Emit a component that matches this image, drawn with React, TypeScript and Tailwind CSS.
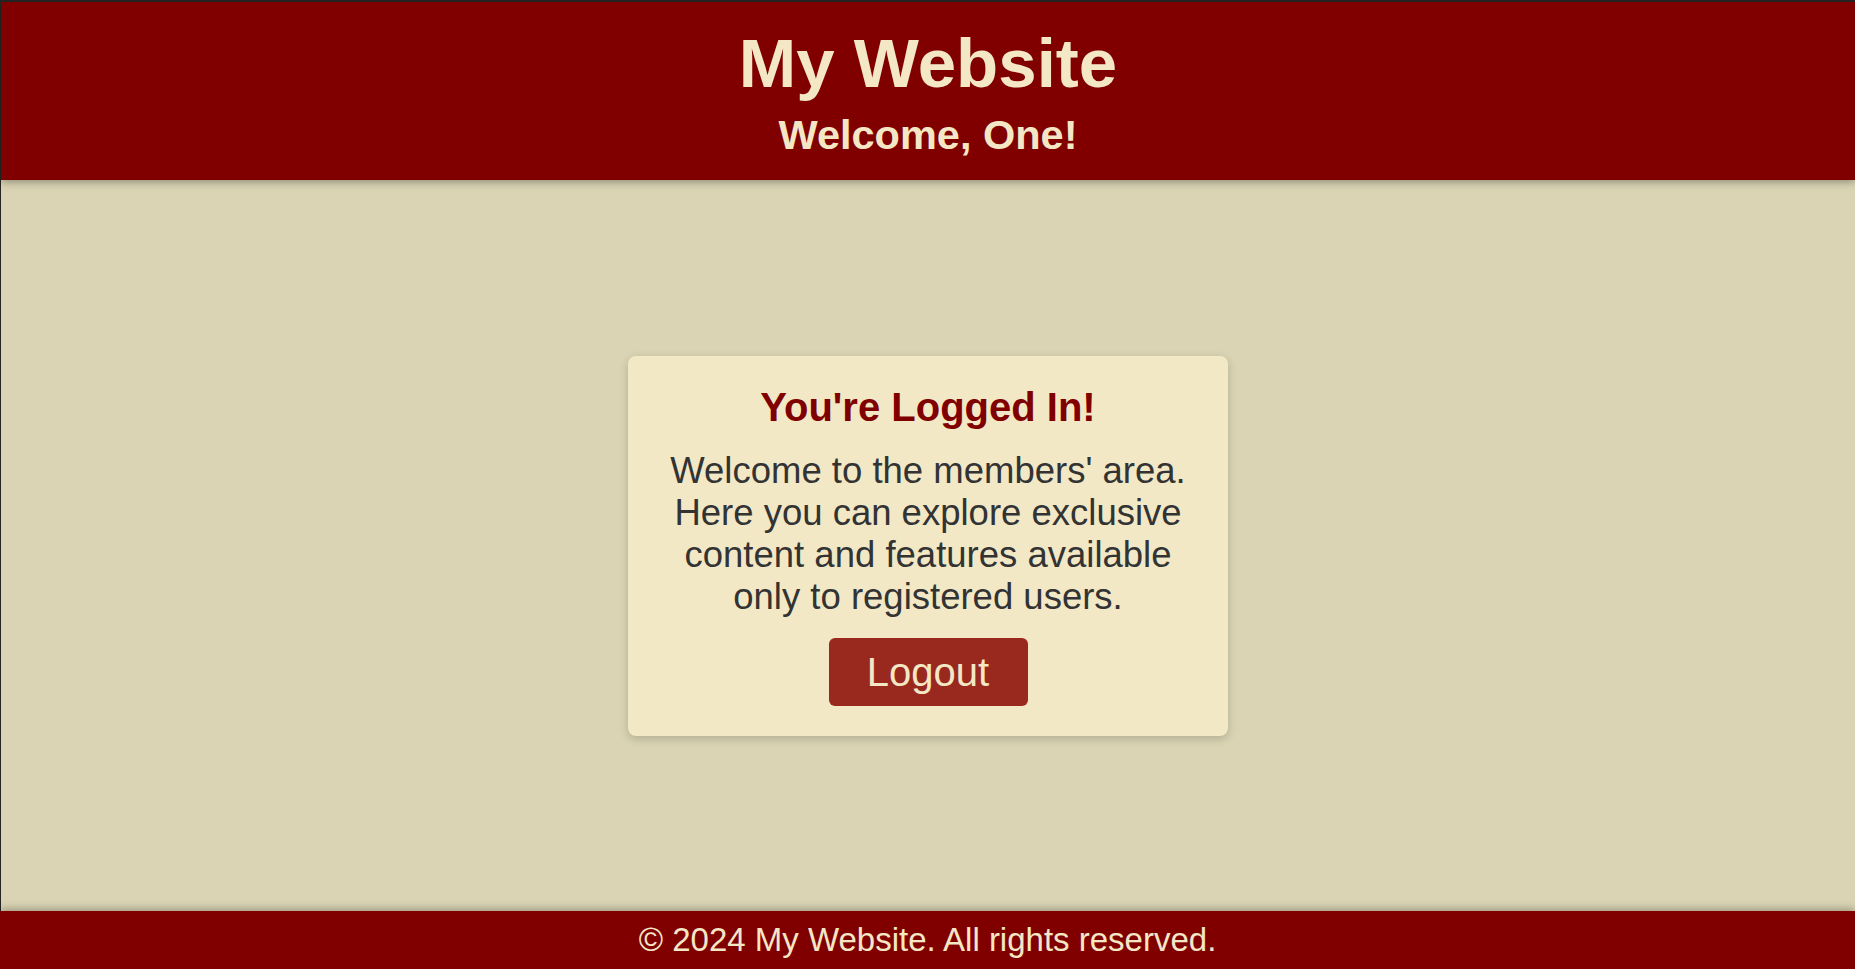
import React from 'react';

const App = () => {
    return (
        <div className="min-h-screen flex flex-col border-t-2 border-[#262626] bg-[#dad4b4] font-['Liberation_Sans',Arial,sans-serif]">
            <div className="flex-1 flex flex-col border-l border-[#262626]">
                {/* Header */}
                <header className="relative z-10 bg-[#800000] text-[#f3e7c6] text-center pt-[22px] pb-[21px] shadow-[0_2px_8px_rgba(0,0,0,0.35)]">
                    <h1 className="text-[69px] font-bold leading-[normal]">My Website</h1>
                    <h2 className="mt-[8px] text-[41.5px] font-bold leading-[normal]">Welcome, One!</h2>
                </header>

                {/* Main */}
                <main className="flex-1 flex items-center justify-center">
                    <div className="w-[600px] rounded-lg bg-[#f2e8c6] px-[30px] pt-[29px] pb-[30px] text-center shadow-[0_3px_10px_rgba(0,0,0,0.18)]">
                        <h3 className="text-[40px] font-bold leading-[normal] text-[#800000]">You're Logged In!</h3>
                        <p className="mt-[20px] text-[36.5px] leading-[normal] text-[#333333]">
                            Welcome to the members' area. Here you can explore exclusive content and features available only to registered users.
                        </p>
                        <button className="mt-[20px] h-[68px] w-[199px] rounded-md bg-[#99291e] pt-[2px] text-[40px] leading-[normal] text-[#f3e7c6]">
                            Logout
                        </button>
                    </div>
                </main>
            </div>

            {/* Footer */}
            <footer className="relative z-10 bg-[#800000] text-[#f3e7c6] text-center py-[10px] shadow-[0_-2px_8px_rgba(0,0,0,0.3)]">
                <p className="text-[33px] leading-[normal]">© 2024 My Website. All rights reserved.</p>
            </footer>
        </div>
    );
};

export default App;
